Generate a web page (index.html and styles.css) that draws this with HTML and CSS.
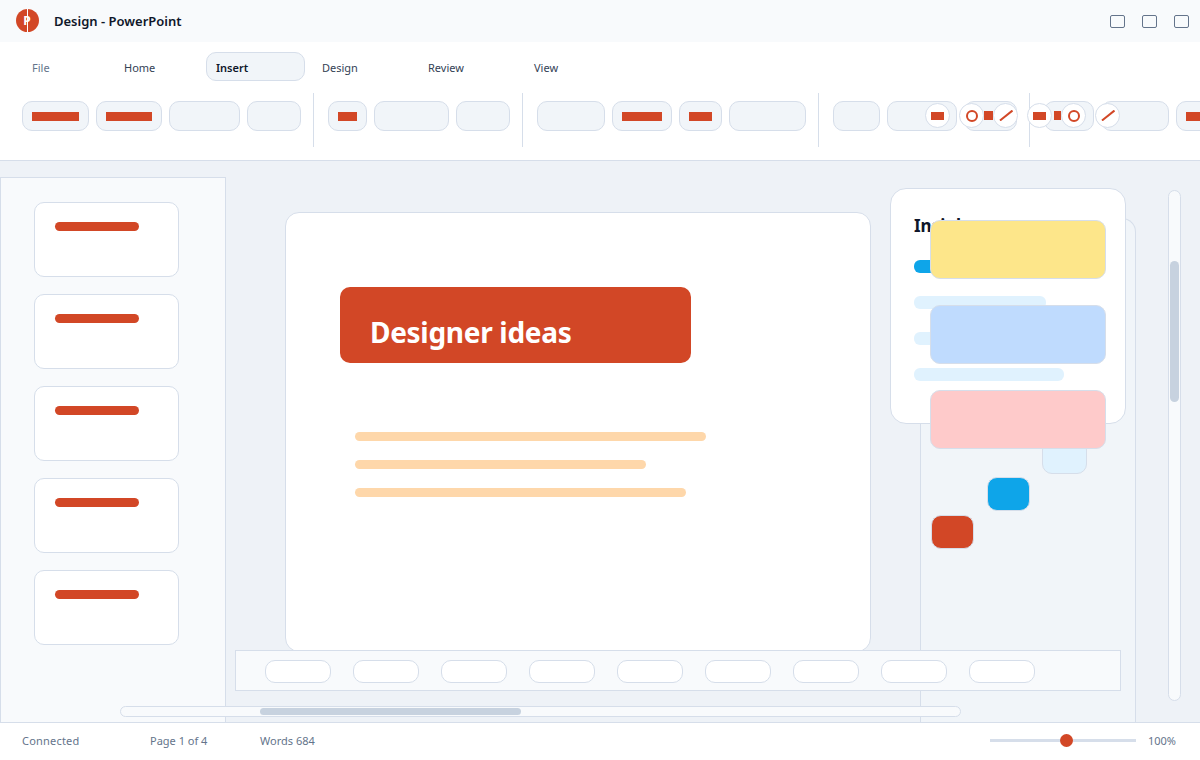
FILE: index.html
```html
<!DOCTYPE html>
<html lang="en">
<head>
<meta charset="utf-8">
<title>Design - PowerPoint</title>
<link rel="stylesheet" href="styles.css">
</head>
<body>
<div class="app">
  <header class="titlebar">
    <svg class="logo" width="23" height="23" viewBox="0 0 23 23"><circle cx="11.500" cy="11.500" r="11.500" fill="#d24726"/><text x="11" y="15.500" class="logo-text">P</text><rect x="11" y="0" width="1" height="23" fill="#fff"/></svg>
    <div class="doc-title">Design - PowerPoint</div>
    <div class="win-controls"><span class="win"></span><span class="win"></span><span class="win"></span></div>
  </header>
  <section class="ribbon">
    <nav class="tabs">
      <span class="tab tab-s muted">File</span>
      <span class="tab tab-s">Home</span>
      <span class="tab active">Insert</span>
      <span class="tab">Design</span>
      <span class="tab">Review</span>
      <span class="tab">View</span>
    </nav>
    <div class="tools">
      <div class="tool w67"><i class="bar w47"></i></div>
      <div class="tool w66"><i class="bar w46"></i></div>
      <div class="tool w71"></div>
      <div class="tool w54"></div>
      <div class="sep"></div>
      <div class="tool w39"><i class="bar w19"></i></div>
      <div class="tool w75"></div>
      <div class="tool w54"></div>
      <div class="sep"></div>
      <div class="tool w68"></div>
      <div class="tool w60"><i class="bar w40"></i></div>
      <div class="tool w43"><i class="bar w23"></i></div>
      <div class="tool w77"></div>
      <div class="sep"></div>
      <div class="tool w47"></div>
      <div class="tool w70"></div>
      <div class="tool w53"></div>
      <div class="sep"></div>
      <div class="tool w50"></div>
      <div class="tool w68"></div>
      <div class="tool w60"><i class="bar w40"></i></div>

      <span class="disc d1"><i class="dot-rect"></i></span>
      <span class="disc d2"><i class="ring"></i></span>
      <i class="sq s1"></i>
      <span class="disc d3"><svg width="14" height="11" viewBox="0 0 14 11"><path d="M1 10.500 13.500 .5" stroke="#d24726" stroke-width="2"/></svg></span>
      <span class="disc d4"><i class="dot-rect"></i></span>
      <i class="sq s2"></i>
      <span class="disc d5"><i class="ring"></i></span>
      <span class="disc d6"><svg width="14" height="11" viewBox="0 0 14 11"><path d="M1 10.500 13.500 .5" stroke="#d24726" stroke-width="2"/></svg></span>
    </div>
  </section>
  <main class="workspace">
    <aside class="slides">
      <div class="thumb"><i></i></div>
      <div class="thumb"><i></i></div>
      <div class="thumb"><i></i></div>
      <div class="thumb"><i></i></div>
      <div class="thumb"><i></i></div>
    </aside>
    <section class="stage">
      <div class="slide">
        <div class="banner">Designer ideas</div>
        <div class="lines">
          <i class="line l1"></i>
          <i class="line l2"></i>
          <i class="line l3"></i>
        </div>
      </div>
    </section>
    <aside class="side-panel"></aside>
    <div class="chipbar">
      <span class="chip"></span><span class="chip"></span><span class="chip"></span><span class="chip"></span><span class="chip"></span><span class="chip"></span><span class="chip"></span><span class="chip"></span><span class="chip"></span>
    </div>
    <div class="hscroll"><i></i></div>
    <div class="vscroll"><i></i></div>
    <div class="card">
      <h2 class="card-title">Insights</h2>
      <i class="pill p-blue"></i>
      <i class="pill p1"></i>
      <i class="pill p2"></i>
      <i class="pill p3"></i>
    </div>
    <div class="mini m-pale"></div>
    <div class="swatch yellow"></div>
    <div class="swatch sky"></div>
    <div class="swatch pink"></div>
    <div class="mini m-blue"></div>
    <div class="mini m-red"></div>
  </main>
  <footer class="status">
    <span class="st st1">Connected</span>
    <span class="st st2">Page 1 of 4</span>
    <span class="st">Words 684</span>
    <div class="zoom"><div class="track"><i class="knob"></i></div><span class="st">100%</span></div>
  </footer>
</div>
</body>
</html>
```
FILE: styles.css
```css
* { box-sizing: border-box; }
html, body { margin: 0; padding: 0; }
body { font-family: "Noto Sans", sans-serif; color: #0f172a; background: #fff; }
i { display: block; }
.app { width: 1200px; height: 760px; display: flex; flex-direction: column; overflow: hidden; }

.titlebar { height: 42px; background: #f8fafc; display: flex; align-items: center; padding: 0 0 0 16px; }
.logo { display: block; flex: none; margin-top: -1px; }
.logo-text { font: 700 12px "Noto Sans", sans-serif; fill: #fff; text-anchor: middle; }
.doc-title { margin-left: 15px; font-size: 13px; font-weight: 600; color: #0f172a; }
.win-controls { margin-left: auto; margin-right: 11px; display: flex; gap: 17px; }
.win { width: 15px; height: 13px; border: 1.500px solid #64748b; border-radius: 2px; }

.ribbon { height: 119px; background: #fff; border-bottom: 1px solid #d6deea; padding: 10px 0 0 22px; }
.tabs { display: flex; gap: 7px; height: 29px; }
.tab { width: 99px; height: 29px; padding: 2px 0 0 9px; display: flex; align-items: center; font-size: 11px; color: #334155; border: 1px solid transparent; border-radius: 10px; }
.tab-s { width: 85px; }
.muted { color: #64748b; }
.active { background: #f1f5f9; border-color: #d6deea; color: #0f172a; font-weight: 600; }
.tools { position: relative; display: flex; align-items: center; gap: 7px; margin-top: 20px; height: 30px; width: 1178px; }
.tool { flex: none; height: 30px; background: #f1f5f9; border: 1px solid #d6deea; border-radius: 10px; display: flex; align-items: center; padding-left: 9px; }
.bar { height: 9px; background: #d24726; }
.w19 { width: 19px; } .w23 { width: 23px; } .w40 { width: 40px; } .w46 { width: 46px; } .w47 { width: 47px; }
.tool.w39 { width: 39px; } .tool.w43 { width: 43px; } .tool.w47 { width: 47px; } .tool.w50 { width: 50px; }
.tool.w53 { width: 53px; } .tool.w54 { width: 54px; } .tool.w60 { width: 60px; } .tool.w66 { width: 66px; }
.tool.w67 { width: 67px; } .tool.w68 { width: 68px; } .tool.w70 { width: 70px; } .tool.w71 { width: 71px; }
.tool.w75 { width: 75px; } .tool.w77 { width: 77px; }
.sep { flex: none; width: 1px; height: 54px; background: #d6deea; margin: -8px 7px 0 5px; align-self: flex-start; }

.disc { position: absolute; top: 2px; width: 25px; height: 25px; border-radius: 50%; background: #fff; border: 1px solid #d6deea; display: flex; align-items: center; justify-content: center; }
.d1 { left: 903px; } .d2 { left: 937px; } .d3 { left: 971px; }
.d4 { left: 1005px; } .d5 { left: 1039px; } .d6 { left: 1073px; }
.dot-rect { width: 13px; height: 8px; background: #d24726; }
.ring { width: 12px; height: 12px; border: 2.500px solid #d24726; border-radius: 50%; }
.sq { position: absolute; top: 10px; height: 9px; background: #d24726; }
.s1 { left: 962px; width: 9px; }
.s2 { left: 1032px; width: 7px; }

.workspace { position: relative; flex: 1; background: #eef2f7; }
.slides { position: absolute; left: 0; top: 16px; bottom: 0; width: 226px; padding: 24px 0 0 33px; background: #f8fafc; border: 1px solid #d6deea; border-bottom: 0; display: flex; flex-direction: column; gap: 17px; }
.thumb { width: 145px; height: 75px; background: #fff; border: 1px solid #d6deea; border-radius: 10px; padding: 19px 0 0 20px; }
.thumb i { width: 84px; height: 9px; border-radius: 5px; background: #d24726; }
.stage { position: absolute; left: 285px; top: 51px; }
.slide { width: 586px; height: 440px; background: #fff; border: 1px solid #d6deea; border-radius: 14px; padding: 74px 0 0 54px; }
.banner { width: 351px; height: 76px; background: #d24726; border-radius: 10px; color: #fff; font-size: 28px; font-weight: 700; letter-spacing: -.3px; padding-left: 30px; line-height: 90px; }
.lines { padding: 69px 0 0 15px; display: flex; flex-direction: column; gap: 19px; }
.line { height: 9px; border-radius: 5px; background: #fed7aa; }
.l1 { width: 351px; } .l2 { width: 291px; } .l3 { width: 331px; }
.side-panel { position: absolute; left: 920px; top: 57px; bottom: 0; width: 216px; background: #f1f5f9; border: 1px solid #d6deea; border-bottom: 0; border-top-right-radius: 14px; }
.chipbar { position: absolute; left: 235px; top: 489px; width: 886px; height: 41px; background: #f8fafc; border: 1px solid #d6deea; display: flex; align-items: center; gap: 22px; padding: 2px 0 0 29px; }
.chip { width: 66px; height: 23px; background: #fff; border: 1px solid #d6deea; border-radius: 10px; }
.hscroll { position: absolute; left: 120px; top: 545px; width: 841px; height: 11px; background: #f8fafc; border: 1px solid #d6deea; border-radius: 6px; }
.hscroll i { position: absolute; left: 139px; top: 1px; width: 261px; height: 7px; background: #c7d2df; border-radius: 4px; }
.vscroll { position: absolute; left: 1168px; top: 29px; width: 13px; height: 511px; background: #f8fafc; border: 1px solid #d6deea; border-radius: 7px; }
.vscroll i { position: absolute; left: 1px; top: 70px; width: 9px; height: 141px; background: #c7d2df; border-radius: 5px; }
.card { position: absolute; left: 890px; top: 27px; width: 236px; height: 236px; background: #fff; border: 1px solid #d6deea; border-radius: 16px; padding: 0 0 0 23px; }
.card-title { margin: 25px 0 0; font-size: 17px; line-height: 24px; font-weight: 700; color: #0f172a; }
.pill { position: absolute; left: 23px; height: 13px; border-radius: 6px; background: #e0f2fe; }
.p-blue { top: 71px; width: 60px; background: #0ea5e9; }
.p1 { top: 107px; width: 132px; }
.p2 { top: 143px; width: 100px; }
.p3 { top: 179px; width: 150px; }
.swatch { position: absolute; left: 930px; width: 176px; height: 59px; border: 1px solid #d6deea; border-radius: 10px; }
.yellow { top: 59px; background: #fde68a; }
.sky { top: 144px; background: #bfdbfe; }
.pink { top: 229px; background: #fecaca; }
.mini { position: absolute; border: 1px solid #d6deea; border-radius: 10px; }
.m-pale { left: 1042px; top: 279px; width: 45px; height: 34px; background: #e0f2fe; }
.m-blue { left: 987px; top: 316px; width: 43px; height: 34px; background: #0ea5e9; }
.m-red { left: 931px; top: 354px; width: 43px; height: 34px; background: #d24726; }

.status { height: 38px; background: #fff; border-top: 1px solid #d6deea; display: flex; align-items: center; padding: 0 24px 2px 22px; position: relative; }
.st { font-size: 11px; color: #64748b; }
.st1 { width: 128px; letter-spacing: .2px; }
.st2 { width: 110px; }
.zoom { margin-left: auto; display: flex; align-items: center; gap: 12px; }
.track { position: relative; width: 146px; height: 3px; background: #d6deea; }
.knob { position: absolute; left: 70px; top: -5px; width: 13px; height: 13px; border-radius: 50%; background: #d24726; }
```
